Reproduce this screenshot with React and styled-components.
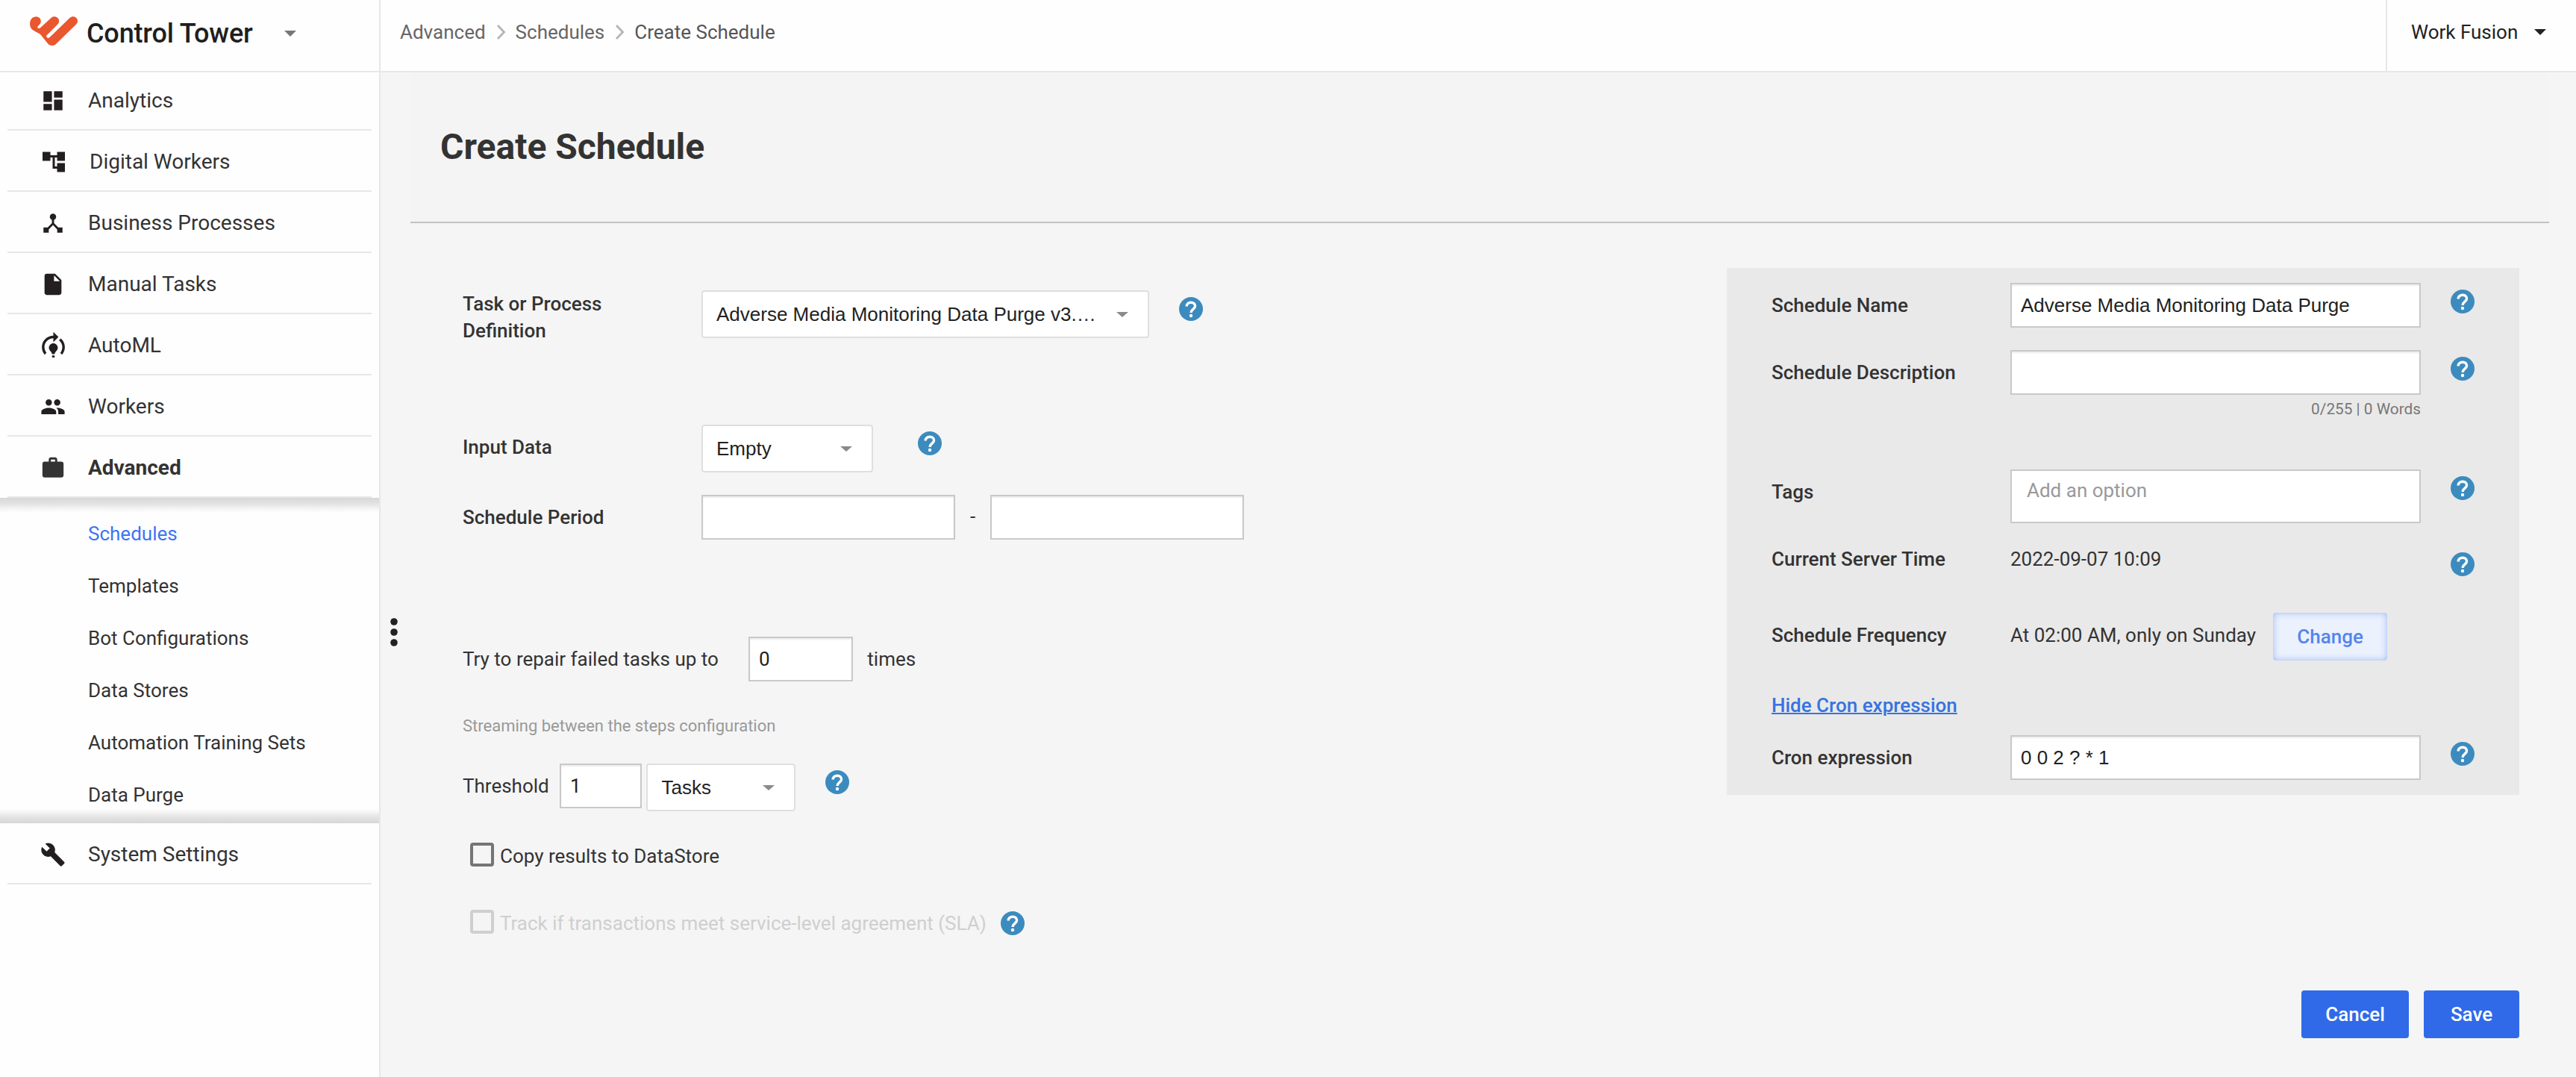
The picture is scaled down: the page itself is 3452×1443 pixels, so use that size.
import React from "react";
import styled, { createGlobalStyle } from "styled-components";
import {
  MdDashboard,
  MdAccountTree,
  MdDeviceHub,
  MdInsertDriveFile,
  MdModelTraining,
  MdPeople,
  MdWork,
  MdBuild,
} from "react-icons/md";

const GlobalStyle = createGlobalStyle`
  *, *::before, *::after { box-sizing: border-box; }
  body {
    margin: 0;
    background: #f5f5f5;
    color: #333;
    font: 400 26px/36px Roboto, "Liberation Sans", sans-serif;
  }
`;

const Page = styled.div`
  display: flex;
  height: 1443px;
  overflow: hidden;
`;

/* ---------- Sidebar ---------- */

const Sidebar = styled.aside`
  flex: none;
  width: 510px;
  background: #fefefe;
  border-right: 2px solid #e7e7e7;
`;

const Brand = styled.div`
  display: flex;
  align-items: center;
  height: 97px;
  padding: 0 0 6px 40px;
  border-bottom: 2px solid #e7e7e7;
`;

const Logo = styled.svg`
  display: block;
  width: 64px;
  height: 40px;
  margin: 0 12px 6px 0;
`;

const BrandName = styled.span`
  margin-right: 42px;
  color: #1f1f1f;
  font-size: 36px;
  font-weight: 500;
  letter-spacing: -0.15px;
`;

const Caret = styled.span`
  flex: none;
  width: 0;
  height: 0;
  border: solid transparent;
  border-width: ${(p) => p.$h || 8}px 8px 0;
  border-top-color: ${(p) => p.$color || "#8a8a8a"};
`;

const NavRow = styled.div`
  display: flex;
  align-items: center;
  gap: 30px;
  height: ${(p) => (p.$first ? 78 : 82)}px;
  margin: 0 10px;
  padding: ${(p) => (p.$first ? 0 : 4)}px 0 0 44px;
  border-bottom: 2px solid #e7e7e7;
  font-size: 28px;
  font-weight: ${(p) => (p.$active ? 700 : 400)};

  svg {
    flex: none;
    margin: 0 -${(p) => p.$bleed || 0}px;
    color: ${(p) => (p.$active ? "#333" : "#231f20")};
  }
`;

const SubMenu = styled.div`
  height: 436px;
  padding: 13px 0 0 118px;
  background:
    linear-gradient(#d7d7d7, #e3e3e3 40%, #f5f5f5 75%, #fefefe) top / 100% 20px no-repeat,
    linear-gradient(#fefefe, #f5f5f5 25%, #e3e3e3 60%, #d7d7d7) bottom / 100% 20px no-repeat;
`;

const SubItem = styled.div`
  height: 70px;
  line-height: 70px;
  color: ${(p) => (p.$active ? "#3e74f5" : "#333")};
`;

/* ---------- Main column ---------- */

const Main = styled.main`
  flex: 1;
  display: flex;
  flex-direction: column;
  min-width: 0;
`;

const TopBar = styled.header`
  flex: none;
  display: flex;
  height: 97px;
  background: #fefefe;
  border-bottom: 2px solid #e7e7e7;
`;

const Crumbs = styled.nav`
  flex: 1;
  display: flex;
  align-items: center;
  padding: 0 0 9px 26px;
  color: #666;

  svg {
    display: block;
    margin: 0 13px 0 14px;
  }
`;

const CurrentCrumb = styled.span`
  padding-bottom: 1px;
  color: #555;
`;

const UserMenu = styled.div`
  display: flex;
  align-items: center;
  justify-content: space-between;
  width: 255px;
  padding: 0 40px 9px 32px;
  border-left: 2px solid #e7e7e7;
  color: #222;
`;

const TitleBar = styled.div`
  flex: none;
  height: 202px;
  margin: 0 36px 0 40px;
  padding: 66px 0 0 40px;
  background: #f4f4f4;
  border-bottom: 2px solid #c2c2c2;
`;

const Title = styled.h1`
  margin: 0;
  font-size: 48px;
  line-height: 67px;
  font-weight: 700;
`;

const Body = styled.div`
  flex: 1;
  display: flex;
`;

const DragHandle = styled.div`
  flex: none;
  width: 36px;
  padding-top: 505px;

  svg {
    display: block;
  }
`;

const Form = styled.section`
  flex: 1;
  padding: 90px 0 0 74px;
`;

const Panel = styled.section`
  flex: none;
  width: 1062px;
  height: 706px;
  margin: 60px 76px 0 0;
  padding: 20px 60px 0;
  background: #e9e9e9;
`;

const Row = styled.div`
  display: flex;
  align-items: flex-start;
  height: ${(p) => p.$h}px;
`;

const Label = styled.span`
  flex: none;
  width: ${(p) => (p.$w ? `${p.$w}px` : "auto")};
  padding-top: ${(p) => (p.$flush ? 0 : 12)}px;
  font-weight: ${(p) => (p.$plain ? 400 : 500)};
  color: ${(p) => (p.$disabled ? "#cfcfcf" : "#333")};
  white-space: pre-line;
`;

const Field = styled.div`
  flex: none;
  width: ${(p) => p.$w}px;
  height: ${(p) => p.$h || 60}px;
  padding: ${(p) => (p.$tags ? "8px 20px" : "10px 12px")};
  background: #fff;
  border: 2px solid #c9c9c9;
  box-shadow: ${(p) => (p.$tags ? "none" : "inset 0 2px 2px rgba(0, 0, 0, 0.075)")};
  color: ${(p) => (p.$tags ? "#999" : "#222")};
  font-family: ${(p) => (p.$arial ? '"Liberation Sans", Arial, sans-serif' : "inherit")};
`;

const Select = styled.div`
  flex: none;
  display: flex;
  align-items: center;
  justify-content: space-between;
  width: ${(p) => p.$w}px;
  height: 64px;
  padding: 0 26px 0 18px;
  background: #fff;
  border: 2px solid #dfdfdf;
  border-radius: 4px;
  color: #222;
  font-family: "Liberation Sans", Arial, sans-serif;
`;

const HelpMark = styled.svg`
  flex: none;
  display: block;
  width: 32px;
  height: 32px;
  margin: ${(p) => p.$top ?? 9}px 0 0 ${(p) => p.$left ?? 40}px;
`;

const Dash = styled.span`
  width: 47px;
  padding-top: 11px;
  text-align: center;
`;

const Hint = styled.div`
  height: 68px;
  margin-top: 10px;
  color: #999;
  font-size: 22px;
`;

const Checkbox = styled.span`
  flex: none;
  width: 32px;
  height: 32px;
  margin: 0 8px 0 10px;
  border: 4px solid ${(p) => (p.$disabled ? "#cfcfcf" : "#757575")};
  border-radius: 4px;
`;

const Counter = styled.div`
  padding-top: 1px;
  color: #777;
  font-size: 20.8px;
  text-align: right;
`;

const Stack = styled.div`
  width: 550px;
`;

const ChangeButton = styled.button`
  width: 153px;
  height: 64px;
  margin-left: 23px;
  padding: 0;
  background: #ebf1fd;
  border: 0;
  border-radius: 4px;
  box-shadow: inset 0 0 10px #9ab7f6;
  color: #5584ee;
  font: inherit;
  font-weight: 500;
`;

const CronLink = styled.a`
  color: #3673e0;
  font-weight: 500;
  text-decoration: underline;
  text-decoration-thickness: 2px;
`;

const Footer = styled.footer`
  display: flex;
  justify-content: flex-end;
  gap: 20px;
  padding: 0 76px 52px 0;
`;

const ActionButton = styled.button`
  width: ${(p) => p.$w}px;
  height: 64px;
  padding: 0 0 1px;
  background: #306ae8;
  border: 0;
  border-radius: 4px;
  color: #fff;
  font: inherit;
  font-weight: 500;
`;

const Help = (props) => (
  <HelpMark viewBox="0 0 32 32" {...props}>
    <circle cx="16" cy="16" r="16" fill="#3c8bbf" />
    <path
      d="M10.2 12.6C10.2 8.9 12.8 7.2 15.9 7.2c3.4 0 5.7 2 5.7 4.9 0 4-5.5 4.2-5.5 8.9"
      fill="none"
      stroke="#fff"
      strokeWidth="3.4"
    />
    <circle cx="16" cy="25" r="2.2" fill="#fff" />
  </HelpMark>
);

const Chevron = () => (
  <svg width="13" height="20" viewBox="0 0 13 20">
    <path d="M2 1l8.5 9L2 19" fill="none" stroke="#b5b5b5" strokeWidth="2.8" />
  </svg>
);

const NAV = [
  { label: "Analytics", icon: MdDashboard },
  { label: "Digital Workers", icon: MdAccountTree, size: 36 },
  { label: "Business Processes", icon: MdDeviceHub },
  { label: "Manual Tasks", icon: MdInsertDriveFile },
  { label: "AutoML", icon: MdModelTraining, size: 41, bleed: 3.5 },
  { label: "Workers", icon: MdPeople },
  { label: "Advanced", icon: MdWork, active: true },
];

const SUB_NAV = [
  "Schedules",
  "Templates",
  "Bot Configurations",
  "Data Stores",
  "Automation Training Sets",
  "Data Purge",
];

export default function App() {
  return (
    <>
      <GlobalStyle />
      <Page>
        <Sidebar>
          <Brand>
            <Logo viewBox="0 0 64 40">
              <path
                fill="#ea562d"
                d="M1.5 15.5C-1.5 10 0 1 8 .2c5-.3 8.5 4.8 6 9.3-1 1.8-3.500 3-3.700 4.8 0 1.700 2.200 2.500 3.700 1L28.500 1.900c2-2 6.300-2.300 8.800.2 2.500 2.500 2.300 6.100.1 8.300L22.600 25.200c-1.600 1.800.9 5.100 3.700 3L53.500 2c2.500-2.400 6.500-2.400 8.800 0 2.300 2.500 2.200 6-.1 8.400L35 37c-3 2.800-8 2.600-10.600-.2L14.500 24.500C12 21.500 3.500 19.500 1.500 15.500z"
              />
            </Logo>
            <BrandName>Control Tower</BrandName>
            <Caret $color="#77777b" />
          </Brand>
          {NAV.map(({ label, icon: Icon, size = 34, bleed, active }, i) => (
            <NavRow key={label} $first={i === 0} $active={active} $bleed={bleed}>
              <Icon size={size} />
              {label}
            </NavRow>
          ))}
          <SubMenu>
            {SUB_NAV.map((name, i) => (
              <SubItem key={name} $active={i === 0}>
                {name}
              </SubItem>
            ))}
          </SubMenu>
          <NavRow>
            <MdBuild size={34} />
            System Settings
          </NavRow>
        </Sidebar>

        <Main>
          <TopBar>
            <Crumbs>
              Advanced
              <Chevron />
              Schedules
              <Chevron />
              <CurrentCrumb>Create Schedule</CurrentCrumb>
            </Crumbs>
            <UserMenu>
              Work Fusion
              <Caret $color="#222" />
            </UserMenu>
          </TopBar>

          <TitleBar>
            <Title>Create Schedule</Title>
          </TitleBar>

          <Body>
            <DragHandle>
              <svg width="36" height="86" viewBox="0 0 36 86" fill="#222">
                <circle cx="18" cy="29" r="4.8" />
                <circle cx="18" cy="43" r="4.8" />
                <circle cx="18" cy="57" r="4.8" />
              </svg>
            </DragHandle>

            <Form>
              <Row $h={180}>
                <Label $w={320} $flush>
                  {"Task or Process\nDefinition"}
                </Label>
                <Select $w={600}>
                  Adverse Media Monitoring Data Purge v3.…
                  <Caret $h={7} />
                </Select>
                <Help />
              </Row>
              <Row $h={94}>
                <Label $w={320}>Input Data</Label>
                <Select $w={230}>
                  Empty
                  <Caret $h={7} />
                </Select>
                <Help $left={60} />
              </Row>
              <Row $h={190}>
                <Label $w={320}>Schedule Period</Label>
                <Field $w={340} />
                <Dash>-</Dash>
                <Field $w={340} />
              </Row>
              <Row $h={92}>
                <Label $w={383} $plain>
                  Try to repair failed tasks up to
                </Label>
                <Field $w={140}>0</Field>
                <Label $plain>&nbsp;&nbsp; times</Label>
              </Row>
              <Hint>Streaming between the steps configuration</Hint>
              <Row $h={106}>
                <Label $w={130} $plain>
                  Threshold
                </Label>
                <Field $w={110}>1</Field>
                <span>&nbsp;</span>
                <Select $w={200}>
                  Tasks
                  <Caret $h={7} />
                </Select>
                <Help />
              </Row>
              <Row $h={90}>
                <Checkbox />
                <Label $flush $plain>
                  Copy results to DataStore
                </Label>
              </Row>
              <Row $h={40}>
                <Checkbox $disabled />
                <Label $flush $plain $disabled>
                  Track if transactions meet service-level agreement (SLA)
                </Label>
                <Help $top={2} $left={19} />
              </Row>
            </Form>

            <Panel>
              <Row $h={90}>
                <Label $w={320}>Schedule Name</Label>
                <Field $w={550} $arial>
                  Adverse Media Monitoring Data Purge
                </Field>
                <Help />
              </Row>
              <Row $h={160}>
                <Label $w={320}>Schedule Description</Label>
                <Stack>
                  <Field $w={550} />
                  <Counter>0/255 | 0 Words</Counter>
                </Stack>
                <Help />
              </Row>
              <Row $h={102}>
                <Label $w={320}>Tags</Label>
                <Field $w={550} $h={72} $tags>
                  Add an option
                </Field>
                <Help />
              </Row>
              <Row $h={90}>
                <Label $w={320} $flush>
                  Current Server Time
                </Label>
                <Label $w={550} $flush $plain>
                  2022-09-07 10:09
                </Label>
                <Help />
              </Row>
              <Row $h={106}>
                <Label $w={320}>Schedule Frequency</Label>
                <Label $plain>At 02:00 AM, only on Sunday</Label>
                <ChangeButton>Change</ChangeButton>
              </Row>
              <Row $h={58}>
                <CronLink>Hide Cron expression</CronLink>
              </Row>
              <Row $h={60}>
                <Label $w={320}>Cron expression</Label>
                <Field $w={550} $arial>
                  0 0 2 ? * 1
                </Field>
                <Help />
              </Row>
            </Panel>
          </Body>

          <Footer>
            <ActionButton $w={144}>Cancel</ActionButton>
            <ActionButton $w={128}>Save</ActionButton>
          </Footer>
        </Main>
      </Page>
    </>
  );
}
